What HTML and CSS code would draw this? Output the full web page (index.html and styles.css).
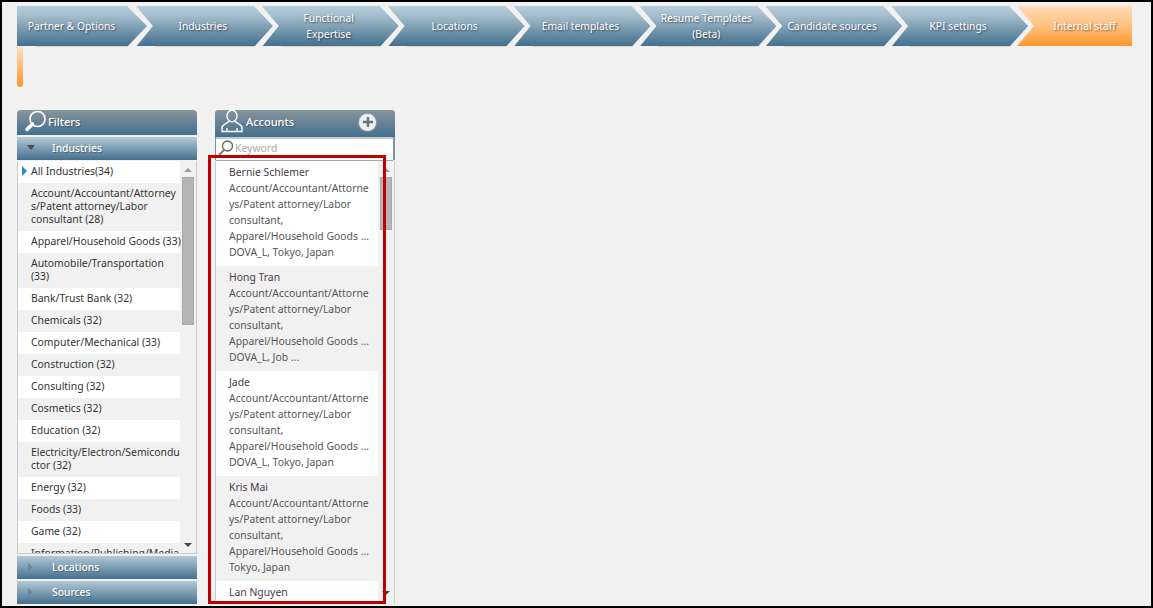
FILE: index.html
```html
<!DOCTYPE html>
<html lang="en">
<head>
<meta charset="utf-8">
<title>Accounts</title>
<link rel="stylesheet" href="styles.css">
</head>
<body>
<div class="frame">
  <nav class="steps">
    <a class="step step-first">Partner &amp; Options</a>
    <a class="step">Industries</a>
    <a class="step">Functional<br>Expertise</a>
    <a class="step">Locations</a>
    <a class="step">Email templates</a>
    <a class="step">Resume Templates<br>(Beta)</a>
    <a class="step">Candidate sources</a>
    <a class="step">KPI settings</a>
    <a class="step step-last">Internal staff</a>
  </nav>
  <div class="stray-tab"></div>
  <main class="panels">
    <section class="panel">
      <header class="panel-head head-filters">
        <svg class="head-icon" width="26" height="24" viewBox="0 0 26 24"><circle cx="15.500" cy="9" r="7.500" fill="none" stroke="#fff" stroke-width="1.700"/><path d="M10.500 14 5 19.500" stroke="#fff" stroke-width="3.600" stroke-linecap="round"/><path d="M4.500 20h.6" stroke="#5f7f96" stroke-width="1.200"/></svg>
        <span>Filters</span>
      </header>
      <div class="accordion">
        <svg class="tri" width="10" height="6" viewBox="0 0 10 6"><path d="M1 0h8L5 5z" fill="#444f58"/></svg>
        <span>Industries</span>
      </div>
      <div class="list-box filter-box">
        <ul class="rows filter-rows">
          <li class="selected">All Industries(34)</li>
          <li>Account/Accountant/Attorney<br>s/Patent attorney/Labor<br>consultant (28)</li>
          <li>Apparel/Household Goods (33)</li>
          <li>Automobile/Transportation<br>(33)</li>
          <li>Bank/Trust Bank (32)</li>
          <li>Chemicals (32)</li>
          <li>Computer/Mechanical (33)</li>
          <li>Construction (32)</li>
          <li>Consulting (32)</li>
          <li>Cosmetics (32)</li>
          <li>Education (32)</li>
          <li>Electricity/Electron/Semicondu<br>ctor (32)</li>
          <li>Energy (32)</li>
          <li>Foods (33)</li>
          <li>Game (32)</li>
          <li>Information/Publishing/Media</li>
        </ul>
        <div class="scrollbar">
          <i class="arrow-up"></i>
          <b class="thumb thumb-filter"></b>
          <i class="arrow-down"></i>
        </div>
      </div>
      <div class="accordion closed">
        <svg class="tri" width="10" height="10" viewBox="0 0 10 10"><path d="M2 1v8l5-4z" fill="#6f8496"/></svg>
        <span>Locations</span>
      </div>
      <div class="accordion closed">
        <svg class="tri" width="10" height="10" viewBox="0 0 10 10"><path d="M2 1v8l5-4z" fill="#6f8496"/></svg>
        <span>Sources</span>
      </div>
    </section>
    <section class="panel">
      <div class="accounts-top">
        <header class="panel-head head-accounts">
          <svg class="head-icon" width="24" height="24" viewBox="0 0 24 24" fill="none" stroke="#fff" stroke-width="1.400"><ellipse cx="12" cy="7" rx="5" ry="5.800"/><path d="M9 12c-1 2-6 3-7 6v4.500h20V18c-1-3-6-4-7-6M7 22v-3M17 22v-3"/></svg>
          <span>Accounts</span>
          <span class="add-btn"><svg width="10" height="10" viewBox="0 0 10 10"><path d="M5 0v10M0 5h10" stroke="#6a737b" stroke-width="2.400"/></svg></span>
        </header>
        <div class="search">
          <svg width="18" height="18" viewBox="0 0 18 18"><circle cx="10.500" cy="7" r="5" fill="none" stroke="#666" stroke-width="1.300"/><path d="M7 11l-5 5" stroke="#777" stroke-width="2"/></svg>
          <span>Keyword</span>
        </div>
      </div>
      <div class="list-box account-box">
        <ul class="rows account-rows">
          <li><em>Bernie Schlemer</em>Account/Accountant/Attorne<br>ys/Patent attorney/Labor<br>consultant,<br>Apparel/Household Goods ...<br>DOVA_L, Tokyo, Japan</li>
          <li><em>Hong Tran</em>Account/Accountant/Attorne<br>ys/Patent attorney/Labor<br>consultant,<br>Apparel/Household Goods ...<br>DOVA_L, Job ...</li>
          <li><em>Jade</em>Account/Accountant/Attorne<br>ys/Patent attorney/Labor<br>consultant,<br>Apparel/Household Goods ...<br>DOVA_L, Tokyo, Japan</li>
          <li><em>Kris Mai</em>Account/Accountant/Attorne<br>ys/Patent attorney/Labor<br>consultant,<br>Apparel/Household Goods ...<br>Tokyo, Japan</li>
          <li><em>Lan Nguyen</em></li>
        </ul>
        <div class="scrollbar scrollbar-account">
          <i class="arrow-up"></i>
          <b class="thumb thumb-account"></b>
          <i class="arrow-down"></i>
        </div>
      </div>
      <div class="highlight"></div>
    </section>
  </main>
</div>
</body>
</html>
```
FILE: styles.css
```css
* { box-sizing: border-box; }
html, body { margin: 0; padding: 0; }
body { font-family: "Noto Sans", "DejaVu Sans", sans-serif; font-size: 10.400px; color: #333; }
.frame {
  width: 1153px; height: 608px; overflow: hidden;
  border: 2px solid #000; background: #f1f1f1;
  padding: 4px 0 0 15px;
}
.steps { display: flex; height: 41px; width: 1115px; }
.step {
  display: flex; align-items: center; justify-content: center; text-align: center;
  width: 137px; height: 41px; margin-left: -11px; padding: 0 3px 2px 0; line-height: 16px;
  font-size: 10.300px;
  color: #fff; text-shadow: 1px 1px 2px rgba(0,0,0,.55);
  background:
    linear-gradient(#e2d3bd, #e2d3bd) 19px 40px / 100px 1px no-repeat,
    linear-gradient(#b8cedb 0%, #a3bccb 25%, #6f93aa 65%, #44708f 100%) 0 0 / 100% 40px no-repeat;
  clip-path: polygon(0 0, 118px 0, 137px 20px, 118px 41px, 0 41px, 17px 20px);
}
.step-first {
  width: 130px; margin-left: 0; padding: 0 21px 2px 0;
  clip-path: polygon(0 0, 110px 0, 130px 20px, 110px 41px, 0 41px);
}
.step-last {
  width: 115px; padding: 0 0 2px 20px;
  background: linear-gradient(#ffdcb8, #ffc07e 50%, #ff982c) 0 0 / 100% 40px no-repeat;
  clip-path: polygon(0 0, 115px 0, 115px 40px, 0 40px, 17px 20px);
}
.stray-tab {
  width: 6px; height: 40px;
  background: linear-gradient(#fbdcc0, #ff982c);
  border-radius: 0 3px 3px 3px;
}
.panels { display: flex; gap: 18px; margin-top: 23px; }
.panel { position: relative; width: 180px; height: 494px; display: flex; flex-direction: column; }
.panel-head {
  display: flex; align-items: center; color: #fff; font-size: 11px; font-weight: 500;
  background: linear-gradient(#87949c, #44708f);
  border-radius: 4px 4px 0 0;
  text-shadow: 1px 1px 1px rgba(0,0,0,.3);
}
.head-filters { height: 25px; padding: 0 0 2px 5px; }
.head-accounts { height: 27px; gap: 2px; padding: 0 0 5px 5px; margin: 0 -2px 0 -1px; }
.head-accounts .add-btn { margin-top: 2px; }
.accounts-top { height: 50px; padding: 0 2px 0 1px; background: #7f97a8; border-radius: 4px 4px 0 0; }
.add-btn {
  display: flex; align-items: center; justify-content: center;
  width: 17px; height: 17px; margin-left: auto; margin-right: 19px;
  border-radius: 50%; background: #eef0f1; box-shadow: 0 0 2px rgba(255,255,255,.7);
}
.accordion {
  display: flex; align-items: center; height: 23px; margin-top: 2px; padding: 0 0 2px 9px;
  color: #fff; font-weight: 500; font-size: 10.300px;
  background: linear-gradient(#b3c9d6, #44708f);
  text-shadow: 1px 1px 1px rgba(0,0,0,.3);
}
.accordion span { margin-left: 16px; }
.search {
  display: flex; align-items: center; height: 23px; padding: 0 0 4px 1px;
  background: #fff; color: #aaa; border-top: 2px solid #c4c9cc; box-shadow: 0 1px 1px rgba(0,0,0,.3);
}
.list-box {
  display: flex; overflow: hidden;
  border: 1px solid #ccc; background: #f1f1f1;
}
.filter-box { height: 393px; margin-top: 1px; border-top: 0; }
.account-box { flex: 1; margin-top: 1px; border-top: 0; border-bottom: 0; }
.rows { list-style: none; margin: 0; padding: 0; width: 162px; flex: none; }
.rows li { padding: 4px 0 5px 13px; line-height: 13px; white-space: nowrap; }
.rows li:nth-child(odd) { background: #fff; }
.rows em { display: block; font-style: normal; color: #4b3a4b; }
.account-rows li { line-height: 16px; padding: 3px 0 6px 13px; color: #555; }
.selected { position: relative; }
.selected::before {
  content: ""; position: absolute; left: 4px; top: 5px;
  border-left: 5px solid #1a8ce0; border-top: 5px solid transparent; border-bottom: 5px solid transparent;
}
.scrollbar { flex: 1; display: flex; flex-direction: column; align-items: center; padding-top: 7px; }
.arrow-up { border: 4px solid transparent; border-top: 0; border-bottom: 4px solid #9a9a9a; }
.arrow-down { margin-top: auto; margin-bottom: 6px; border: 4px solid transparent; border-bottom: 0; border-top: 4px solid #444; }
.scrollbar-account .arrow-down { margin-bottom: 9px; }
.thumb { width: 12px; background: #b5b5b5; border: 1px solid #a8a8a8; margin-top: 5px; }
.thumb-filter { height: 148px; }
.thumb-account { height: 53px; }
.highlight {
  position: absolute; left: -7px; top: 45px; width: 178px; height: 449px;
  border: 3px solid #be0000; pointer-events: none;
}
```
